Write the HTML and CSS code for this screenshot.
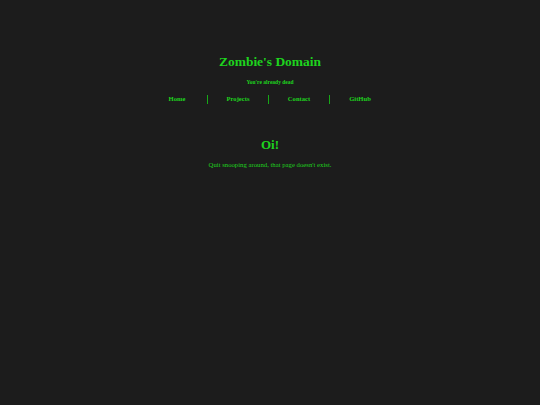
FILE: index.html
```html
<!DOCTYPE html>
<html>
<head>
<meta charset="utf-8">
<link rel="stylesheet" href="styles.css">
</head>
<body>
<header class="site-header">
  <h1 class="title">Zombie's Domain</h1>
  <p class="tagline">You're already dead</p>
  <nav class="nav">
    <a class="nav-link" href="#">Home</a>
    <span class="sep"></span>
    <a class="nav-link" href="#">Projects</a>
    <span class="sep"></span>
    <a class="nav-link" href="#">Contact</a>
    <span class="sep"></span>
    <a class="nav-link" href="#">GitHub</a>
  </nav>
</header>
<main class="content">
  <h2 class="oops">Oi!</h2>
  <p class="message">Quit snooping around, that page doesn't exist.</p>
</main>
</body>
</html>
```
FILE: styles.css
```css
html, body {
  margin: 0;
  padding: 0;
  background: #1c1c1c;
  height: 100%;
}
body {
  font-family: "Liberation Serif", "Times New Roman", serif;
  font-size: 6.72px;
  color: #1ed31e;
  display: flex;
  flex-direction: column;
  align-items: center;
}
.site-header {
  display: flex;
  flex-direction: column;
  align-items: center;
  padding-top: 53px;
}
.title {
  margin: 0;
  font-size: 13.45px;
  font-weight: bold;
  line-height: 18px;
}
.tagline {
  margin: 7px 0 0;
  font-size: 5.5px;
  font-weight: bold;
  line-height: 8px;
}
.nav {
  display: flex;
  align-items: center;
  margin-top: 8px;
  margin-right: 3px;
}
.nav-link {
  color: #1ed31e;
  text-decoration: none;
  font-weight: bold;
  font-size: 6.6px;
  width: 60px;
  text-align: center;
  line-height: 10px;
}
.sep {
  width: 1px;
  height: 9px;
  background: #17a817;
}
.content {
  display: flex;
  flex-direction: column;
  align-items: center;
  margin-top: 32px;
}
.oops {
  margin: 0;
  font-size: 13px;
  font-weight: bold;
  line-height: 18px;
}
.message {
  margin: 6px 0 0;
  font-size: 6.72px;
  line-height: 9px;
}
```
